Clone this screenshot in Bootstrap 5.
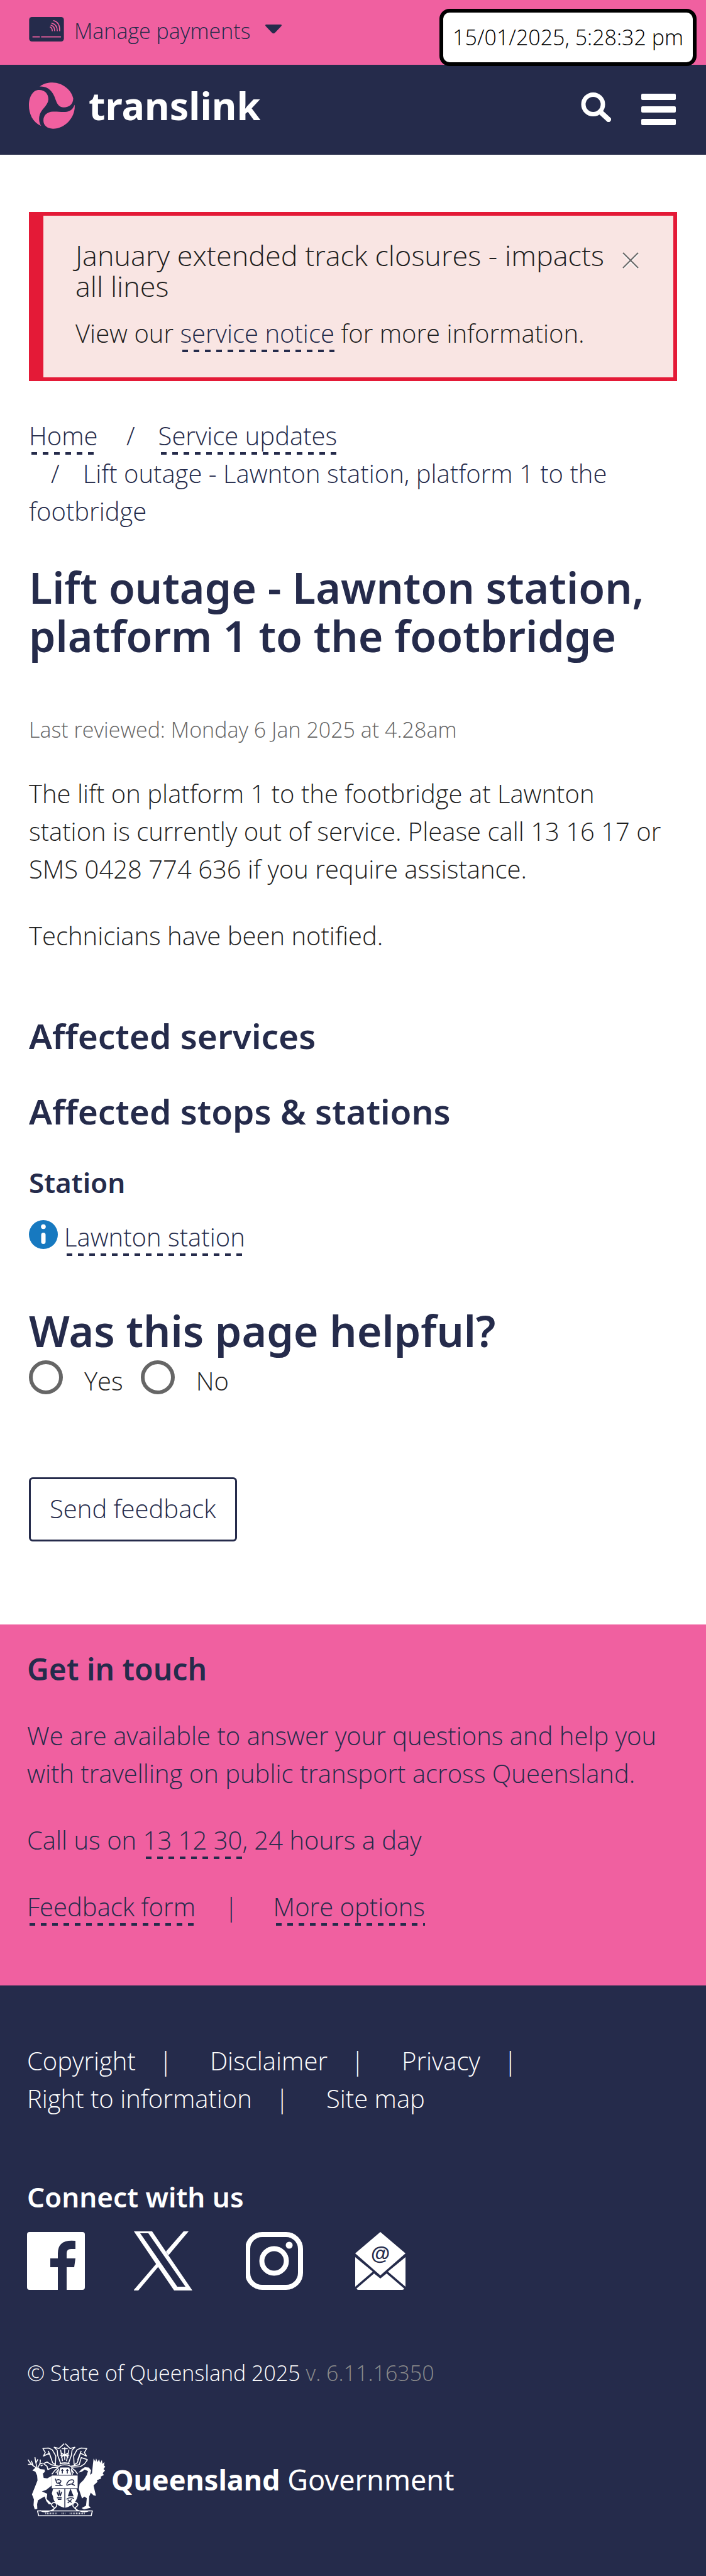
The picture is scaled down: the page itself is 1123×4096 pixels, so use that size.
<!DOCTYPE html>
<html lang="en">
<head>
<meta charset="utf-8">
<meta name="viewport" content="width=device-width, initial-scale=1">
<title>Lift outage - Lawnton station | Translink</title>
<link href="https://cdn.jsdelivr.net/npm/bootstrap@5.3.0/dist/css/bootstrap.min.css" rel="stylesheet">
<script src="https://cdn.jsdelivr.net/npm/bootstrap@5.3.0/dist/js/bootstrap.bundle.min.js"></script>
<style>
:root{--navy:#252b4b;--pink:#f060a0}
body{font:300 40px/60px "Open Sans","Noto Sans",sans-serif;color:#1f1f1f}
a{color:inherit;text-decoration:none}
svg{display:block;flex:none}
h1,h2,h3,h4,p,ul,ol{margin:0}
h1,h2,h3,h4,.wordmark{font-family:"Noto Sans","Open Sans",sans-serif;font-weight:600;color:var(--navy)}
h1,.title-xl{font-size:68px;line-height:77px}
.title-lg{font-size:55px;line-height:60px}
.title-sm{font-size:44px;line-height:60px}
.title-md{font-size:48px;line-height:60px}
.text-sub{font-size:34px;line-height:51px}
.dash-link{color:var(--navy);padding-bottom:3px;background:linear-gradient(90deg,var(--navy) 50%,transparent 50%) 4px 100%/18px 4px repeat-x}
.bg-pink{background:var(--pink);color:var(--navy)}
.bg-navy{background:var(--navy);color:#fff}
.side-pad{padding-left:46px;padding-right:46px}
.foot-pad{padding-left:43px;padding-right:43px}
.payments{min-height:103px;padding-top:24px}
.payments button{background:none;border:0;padding:0;color:var(--navy);font-weight:300}
.payments svg{margin-bottom:6px}
.clock{position:absolute;top:14px;right:15px;border:6px solid #000;border-radius:16px;background:#fff;color:#000;padding:14px 15px}
.site-head{min-height:143px;border-bottom:1px solid #1c2140}
.brand{gap:22px;margin-bottom:12px}
.wordmark{font-size:61px;line-height:60px;font-weight:700;color:#fff}
.plain-btn{background:none;border:0;padding:0;color:#fff}
.notice{margin-top:91px;border:6px solid #e41a37;border-left-width:23px;border-radius:0;background:#f9e5e3;padding:38px 55px 40px 51px;color:#1f1f1f}
.notice-title{font-size:45px;line-height:49px}
.notice p{margin-top:21px}
.notice .plain-btn{margin:20px 0 0 8px}
.crumbs{margin-top:57px;color:var(--navy)}
.crumbs li+li::before{content:"/";padding:0 37px 0 35px}
.headline{margin-top:52px}
.reviewed{margin-top:86px;color:#666}
.gap-para{margin-top:46px}
.sec-services{margin-top:99px}
.sec-stops{margin-top:60px}
.sec-station{margin:53px 0 27px}
.sec-helpful{margin-top:80px}
.station{gap:10px}
.station svg{margin-bottom:8px}
.choice{margin-top:9px}
.choice input{appearance:none;width:54px;height:54px;border:6px solid #666;border-radius:50%;margin:0 34px 12px 0;background:#fff}
.choice label{margin-right:28px}
.btn-feedback{margin:120px 0 132px;padding:17px 30px 19px;border:3px solid var(--navy);border-radius:6px;font-size:40px;line-height:60px;font-weight:300;color:var(--navy)}
.contact{padding-top:41px;padding-bottom:95px}
.contact-links span+span{margin-left:46px}
.contact-links span:last-child{margin-left:56px}
.site-foot{padding-top:90px;padding-bottom:96px}
.foot-links li:not(:last-child)::after{content:"|";padding:0 49px 0 37px}
.sec-connect{margin-top:96px}
.social{gap:82px;margin-top:26px}
.legal{margin-top:107px}
.version{color:#8b8b8b}
.gov{margin-top:86px;gap:9px}
.gov-name{font:400 45px/60px "Noto Sans","Open Sans",sans-serif}
</style>
</head>
<body>
<div class="bg-pink payments side-pad position-relative">
  <button type="button" class="d-flex align-items-center text-sub">
    <svg width="56" height="39" viewBox="30 57 173 122" aria-hidden="true"><rect x="30" y="57" width="173" height="122" rx="14" fill="#252b4b"/><g fill="none" stroke="#f060a0" stroke-linecap="round" stroke-width="6"><path d="M49 156H81M92 156H186"/><g stroke-width="5"><path d="M135 107Q145 112 145 126M139 98Q157 104 157 126M143 88Q170 94 170 126M152 75Q184 84 182 126"/></g></g></svg>
    <span class="mx-3">Manage payments</span>
    <svg width="26" height="15" viewBox="0 0 26 15" class="ms-2" aria-hidden="true"><path d="M1 0H25Q27 1 25 3L15 13.500Q13 15 11 13.500L1 3Q-1 1 1 0Z" fill="#252b4b"/></svg>
  </button>
  <div class="clock text-sub">15/01/2025, 5:28:32 pm</div>
</div>
<header class="bg-navy site-head side-pad d-flex align-items-center justify-content-between">
  <a href="#" class="brand d-flex align-items-center">
    <svg width="73" height="74" viewBox="24 380 231 232" aria-hidden="true"><g fill="#f060a0"><path d="M78 400C100 384 120 380 142 380C195 380 240 420 247 460C247 490 225 505 200 505C175 505 165 485 158 465C145 425 120 397 78 400Z"/><path d="M75 417C105 417 122 437 122 465C119 500 80 515 76 552C74 572 77 585 86 598C42 580 24 535 24 495C24 450 45 417 75 417Z"/><path d="M254 491C260 552 208 612 145 612C115 610 97 595 97 570C97 545 115 527 145 526C190 524 235 543 254 491Z"/></g></svg>
    <span class="wordmark">translink</span>
  </a>
  <div class="d-flex align-items-center">
    <button type="button" class="plain-btn me-5 pb-2" aria-label="Search"><svg width="48" height="47" viewBox="0 0 48 47"><circle cx="19.500" cy="19" r="15.500" fill="none" stroke="#fff" stroke-width="7"/><path d="M31 31L44 43" stroke="#fff" stroke-width="8" stroke-linecap="round"/></svg></button>
    <button type="button" class="plain-btn" aria-label="Menu"><svg width="57" height="50" viewBox="0 0 57 50"><g fill="#fff"><rect width="55" height="10" rx="2"/><rect y="20" width="55" height="10" rx="2"/><rect y="40" width="55" height="10" rx="2"/></g></svg></button>
  </div>
</header>
<main class="side-pad">
  <div class="notice alert mb-0" role="alert">
    <div class="d-flex align-items-start">
      <div class="notice-title flex-grow-1">January extended track closures - impacts all lines</div>
      <button type="button" class="plain-btn" aria-label="Close"><svg width="26" height="26" viewBox="0 0 26 26"><path d="M1 3L25 27M25 3L1 27" stroke="#fff" stroke-width="2"/><path d="M1 1L25 25M25 1L1 25" stroke="#666" stroke-width="2"/></svg></button>
    </div>
    <p>View our <a href="#" class="dash-link">service notice</a> for more information.</p>
  </div>
  <nav aria-label="Breadcrumb">
    <ol class="crumbs list-unstyled">
      <li class="d-inline-block"><a href="#" class="dash-link">Home</a></li>
      <li class="d-inline-block"><a href="#" class="dash-link">Service updates</a></li>
      <li class="d-inline-block">Lift outage - Lawnton station, platform 1 to the footbridge</li>
    </ol>
  </nav>
  <h1 class="headline">Lift outage - Lawnton station, platform 1 to the footbridge</h1>
  <p class="text-sub reviewed">Last reviewed: Monday 6 Jan 2025 at 4.28am</p>
  <p class="gap-para">The lift on platform 1 to the footbridge at Lawnton station is currently out of service. Please call 13 16 17 or SMS 0428 774 636 if you require assistance.</p>
  <p class="gap-para">Technicians have been notified.</p>
  <h2 class="title-lg sec-services">Affected services</h2>
  <h2 class="title-lg sec-stops">Affected stops &amp; stations</h2>
  <h3 class="title-sm sec-station">Station</h3>
  <div class="station d-flex align-items-center">
    <svg width="46" height="46" viewBox="0 0 46 46" aria-hidden="true"><circle cx="23" cy="23" r="23" fill="#1779c0"/><circle cx="23" cy="10.500" r="3.800" fill="#fff"/><rect x="19.500" y="20" width="7" height="18" rx="3.500" fill="#fff"/></svg>
    <span><a href="#" class="dash-link">Lawnton station</a></span>
  </div>
  <h2 class="title-xl sec-helpful">Was this page helpful?</h2>
  <div class="choice d-flex align-items-center">
    <input type="radio" name="helpful" id="yes"><label for="yes">Yes</label>
    <input type="radio" name="helpful" id="no"><label for="no">No</label>
  </div>
  <button type="button" class="btn btn-feedback">Send feedback</button>
</main>
<section class="bg-pink foot-pad contact">
  <h3 class="title-md">Get in touch</h3>
  <p class="gap-para">We are available to answer your questions and help you with travelling on public transport across Queensland.</p>
  <p class="gap-para">Call us on <a href="#" class="dash-link">13 12 30</a>, 24 hours a day</p>
  <div class="gap-para d-flex contact-links"><span><a href="#" class="dash-link">Feedback form</a></span><span>|</span><span><a href="#" class="dash-link">More options</a></span></div>
</section>
<footer class="bg-navy foot-pad site-foot">
  <ul class="foot-links list-unstyled">
    <li class="d-inline-block"><a href="#">Copyright</a></li>
    <li class="d-inline-block"><a href="#">Disclaimer</a></li>
    <li class="d-inline-block"><a href="#">Privacy</a></li>
    <li class="d-inline-block"><a href="#">Right to information</a></li>
    <li class="d-inline-block"><a href="#">Site map</a></li>
  </ul>
  <h3 class="title-sm text-white sec-connect">Connect with us</h3>
  <div class="social d-flex">
    <a href="#" aria-label="Facebook"><svg width="92" height="92" viewBox="0 0 92 92"><path fill="#fff" d="M4 0H88Q92 0 92 4V88Q92 92 88 92H63V56H75L77 42H63V34Q63 27 70 27H77V14Q49 11 49 34V42H37V56H49V92H4Q0 92 0 88V4Q0 0 4 0Z"/></svg></a>
    <a href="#" aria-label="X"><svg width="92" height="92" viewBox="4 1 92 92" overflow="visible"><g fill="#fff"><path fill-rule="evenodd" d="M0 0H29L93 94H64ZM10 3L69 88H82L23 3Z"/><path d="M79 0H87L55 38L51 32ZM0 94H7L39 56L36 51L0 93Z"/></g></svg></a>
    <a href="#" aria-label="Instagram"><svg width="92" height="92" viewBox="1 0 92 92"><g fill="none" stroke="#fff" stroke-width="8"><rect x="4" y="4" width="84" height="84" rx="23"/><circle cx="46" cy="46" r="19.500"/></g><circle cx="70" cy="21" r="5.500" fill="#fff"/></svg></a>
    <a href="#" aria-label="Email"><svg width="81" height="92" viewBox="0 0 81 92"><g fill="#fff"><path d="M40 0L80 34L40 69L0 34Z"/><path d="M0 40L28 63L0 87ZM80 40L52 63L80 87ZM2 90L30 66L40 74L50 66L78 90Q77 92 75 92H5Q3 92 2 90Z"/></g><text x="40" y="45" text-anchor="middle" font-family="Liberation Sans" font-weight="700" font-size="31" fill="#252b4b">@</text></svg></a>
  </div>
  <p class="text-sub legal">© State of Queensland 2025 <span class="version">v. 6.11.16350</span></p>
  <a href="#" class="gov d-flex align-items-center">
    <svg width="125" height="116" viewBox="55 28 392 367" aria-hidden="true">
      <g fill="#fff">
        <path d="M80 165L98 148L113 150L118 158L142 160L143 172L133 180L137 202L155 204L178 192V240L150 262L128 270L155 282L152 308L170 325L180 336L163 335L150 318L142 295L125 305L108 315L104 335L105 358L92 360L86 340L88 310L78 285L92 250L106 215L104 190L95 170Z"/>
        <path d="M388 105L397 120L401 104L408 122L416 108L421 126L430 112L433 132L443 122L441 140L447 145L438 158L446 165L434 178L440 188L424 196L426 205L405 214L408 222L388 240L400 292L388 290L374 276L366 296L364 342L374 352L340 360L328 354L350 342L354 304L342 296L330 306L314 258L318 232L338 212L354 188L360 168L344 160L330 170L312 176L326 160L344 148L364 150L376 164L370 186L380 180Z"/>
        <path d="M178 190H308V254H178Z"/><path d="M184 258H241V352Q188 338 184 296L178 280ZM246 258H302L310 280Q304 338 246 352Z"/>
        <path d="M220 150H266L276 186H212Z"/>
      </g>
      <g fill="none" stroke="#fff" stroke-width="5" stroke-linejoin="round">
        <path d="M98 150Q72 136 58 110M74 133L58 134M84 140L75 116M103 148Q96 122 93 98M98 127L108 108M108 148Q122 130 120 110M117 132L132 128M122 142L132 137"/>
        <path d="M240 30L214 54L190 48L205 62L208 90L222 128H262L276 90L280 62L294 48L270 54L246 30M222 60L232 118M264 60L252 118M228 55H258M224 76L262 98M262 76L224 98M243 48V112M220 88H266"/>
        <path d="M180 60L160 52L133 54L145 74L136 92L166 78L182 126L198 136M180 60L198 92L196 134M160 66L178 112M136 130L154 122L176 136L218 144M136 130L154 144L158 160L182 150L212 148"/>
        <path d="M305 60L326 52L354 54L342 74L352 92L322 78L306 126L290 136M305 60L288 92L290 134M326 66L308 112M358 110L326 100L316 136L268 144M358 110L342 132L320 146L276 148"/>
        <path d="M218 132Q243 120 268 132M216 141Q243 132 270 141M210 150L192 166L178 184M198 178L212 158L206 186M276 150L296 166L308 184M288 178L276 158L282 186"/>
        <path d="M106 368H382L376 393H112ZM118 366C150 382 188 366 202 344Q204 324 186 326Q170 334 182 346Q196 350 184 366M368 366C336 382 300 366 284 344Q282 324 300 326Q316 334 304 346Q290 350 304 366"/>
      </g>
      <g fill="none" stroke="#252b4b" stroke-width="5"><path d="M231 158V180M225 165H237M256 158V180M250 165H262"/><path d="M196 206L202 226Q220 238 224 218Q216 206 202 214M196 240H232M212 222L222 240M252 236Q262 208 284 212Q296 222 280 230M252 240L276 232L294 240M204 272L212 294L216 264L220 294L228 272M204 302H228M208 310H226"/><path d="M252 310Q268 296 290 306M258 312L278 326M278 310L258 328"/><path d="M272 262L262 292H284Z" fill="#252b4b"/></g>
      <path d="M146 381H208M228 381H246M268 381H346" stroke="#fff" stroke-width="8" stroke-dasharray="3 5"/>
    </svg>
    <span class="gov-name"><b>Queensland</b> Government</span>
  </a>
</footer>
</body>
</html>
